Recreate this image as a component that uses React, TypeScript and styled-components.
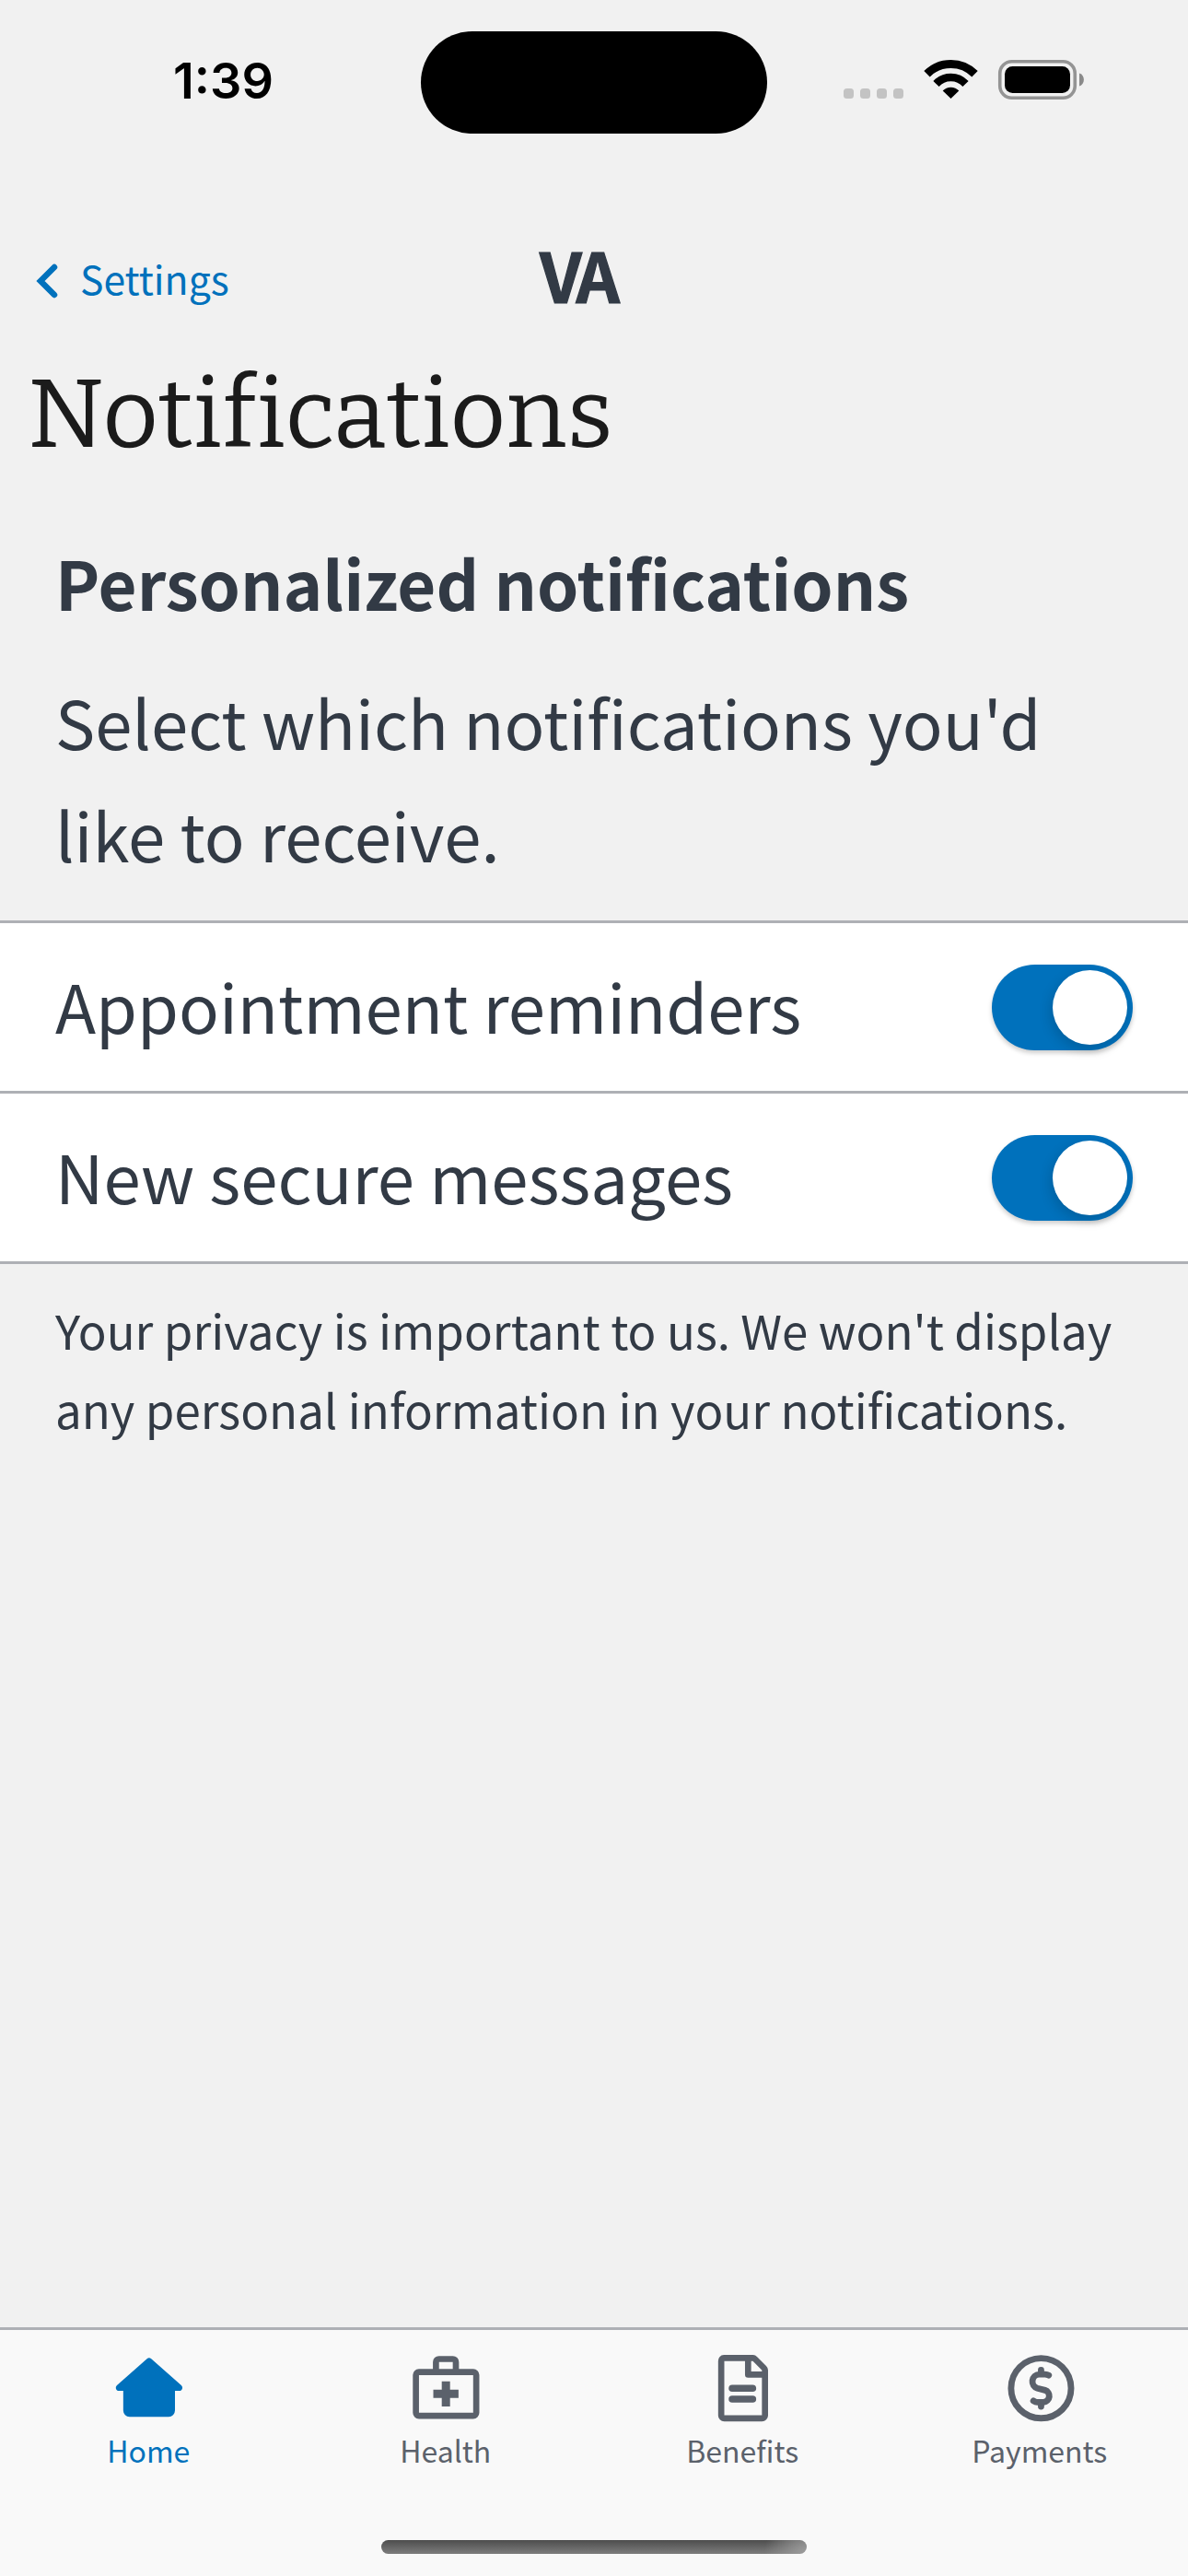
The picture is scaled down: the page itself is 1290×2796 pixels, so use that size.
import React, { useState } from "react";
import styled, { createGlobalStyle } from "styled-components";

const page = "#f1f1f1";
const ink = "#323a45";
const blue = "#0071bc";
const slate = "#5b616b";
const rule = "#aeb0b5";
const sans = `"Source Sans Pro", "Noto Sans CJK SC", "Noto Sans", sans-serif`;

const GlobalStyle = createGlobalStyle`
  * { box-sizing: border-box; }
  html, body { margin: 0; padding: 0; background: ${page}; }
  button { border: 0; padding: 0; background: none; font: inherit; color: inherit; }
`;

const Screen = styled.div`
  width: 1290px;
  height: 2796px;
  display: flex;
  flex-direction: column;
  background: ${page};
  color: ${ink};
  font-family: ${sans};
  overflow: hidden;
`;

const StatusBar = styled.header`
  height: 177px;
  display: grid;
  grid-template-columns: 457px 376px 1fr;
  color: #000;
`;

const Clock = styled.time`
  padding: 55px 0 0 188px;
  font-family: Inter, sans-serif;
  font-weight: 600;
  font-size: 54px;
  line-height: 66px;
`;

const Island = styled.div`
  margin-top: 33.5px;
  height: 111px;
  border-radius: 56px;
  background: #000;
`;

const StatusIcons = styled.div`
  display: flex;
  padding: 64px 0 0 83px;
`;

const NavBar = styled.nav`
  height: 205px;
  display: grid;
  grid-template-columns: 586px 1fr;
`;

const BackButton = styled.button`
  display: flex;
  align-items: flex-start;
  padding: 92px 0 0 39px;
  gap: 24px;
  color: ${blue};
`;

const BackIcon = styled.svg`
  margin-top: 17px;
`;

const BackLabel = styled.span`
  font-size: 42.7px;
  line-height: 64px;
`;

const Logo = styled.div`
  padding-top: 70px;
  font-weight: 700;
  font-size: 74px;
  line-height: 100px;
  letter-spacing: -5px;
  -webkit-text-stroke: 1.2px ${ink};
`;

const Title = styled.h1`
  margin: 0;
  height: 190px;
  padding: 2px 0 0 30px;
  font-family: "Bitter", "DejaVu Serif Condensed", "DejaVu Serif", serif;
  font-weight: 400;
  font-size: 105px;
  line-height: 132px;
  color: #1b1b1b;
`;

const Intro = styled.section`
  height: 427px;
  padding: 0 59px 0 60px;
`;

const SectionTitle = styled.h2`
  margin: -1px 0 29px;
  font-weight: 700;
  font-size: 72.5px;
  line-height: 122px;
`;

const Lead = styled.p`
  margin: 0;
  font-size: 72.5px;
  line-height: 122px;
`;

const Options = styled.ul`
  margin: 0;
  padding: 0;
  list-style: none;
  background: #fff;
  border-top: 3px solid ${rule};
`;

const Option = styled.li`
  height: 185px;
  display: flex;
  align-items: center;
  justify-content: space-between;
  padding: 0 60px;
  border-bottom: 3px solid ${rule};
`;

const OptionLabel = styled.span`
  font-size: 72.5px;
  line-height: 122px;
  padding-bottom: 5px;
`;

const Track = styled.button<{ $on: boolean }>`
  display: flex;
  justify-content: ${(p) => (p.$on ? "flex-end" : "flex-start")};
  align-items: center;
  width: 153px;
  height: 93px;
  padding: 0 6px;
  border-radius: 47px;
  background: ${(p) => (p.$on ? blue : "#b3b3b3")};
  box-shadow: 0 3px 5px rgba(0, 0, 0, 0.2);
`;

const Knob = styled.span`
  width: 81px;
  height: 81px;
  border-radius: 50%;
  background: #fff;
  box-shadow: -2px 5px 14px rgba(0, 0, 0, 0.16);
`;

const Note = styled.p`
  margin: 0;
  padding: 28px 40px 0 60px;
  font-size: 51px;
  line-height: 86px;
`;

const TabBar = styled.nav`
  margin-top: auto;
  height: 270px;
  background: #f9f9f9;
  border-top: 3px solid ${rule};
  display: flex;
  flex-direction: column;
  align-items: center;
`;

const Tabs = styled.div`
  width: 100%;
  height: 228px;
  display: grid;
  grid-template-columns: repeat(4, 1fr);
`;

const Tab = styled.button<{ $active?: boolean }>`
  display: flex;
  flex-direction: column;
  align-items: center;
  padding-top: 19.8px;
  color: ${(p) => (p.$active ? blue : slate)};
`;

const Glyph = styled.svg`
  width: 86.4px;
  height: 86.4px;
  flex: none;
`;

const TabLabel = styled.span`
  font-size: 32px;
  line-height: 48px;
`;

const HomeIndicator = styled.div`
  width: 462px;
  height: 15px;
  border-radius: 8px;
  background: radial-gradient(circle at 100% 100%, #9d9d9d, transparent 46px), linear-gradient(#4d4d4d, #7d7d7d);
`;

const tabs = [
  {
    label: "Home",
    icon: (
      <path
        fill="currentColor"
        d="M11.550 3.100a1 1 0 0 1 1.300 0L21.900 11.100c.65.6.3 1.700-.6 1.700H20v5.900a1.900 1.900 0 0 1-1.900 1.900H6.300a1.900 1.900 0 0 1-1.900-1.900v-5.900H3.100c-.9 0-1.250-1.100-.6-1.700z"
      />
    ),
  },
  {
    label: "Health",
    icon: (
      <g stroke="currentColor">
        <rect x="2.950" y="7.100" width="18.200" height="13.200" rx=".9" strokeWidth="1.850" />
        <path d="M9 7V4.100a.9.9 0 0 1 .9-.9h4.200a.9.9 0 0 1 .9.900V7" strokeWidth="1.850" />
        <path d="M12 9.900v7.600M8.200 13.700h7.600" strokeWidth="2.500" />
      </g>
    ),
  },
  {
    label: "Benefits",
    icon: (
      <g stroke="currentColor">
        <path
          d="M6.400 2.900h8.800c.2 0 .4.100.6.300l2.700 2.700c.2.200.3.400.3.600v13.700c0 .5-.4.900-.9.900H6.500c-.5 0-.9-.4-.9-.9V3.800c0-.5.3-.9.800-.9z"
          strokeWidth="1.850"
        />
        <path d="M13.700 3v4.900h5" strokeWidth="1.850" strokeLinejoin="round" />
        <path d="M8.900 12h6.200M8.900 15.300h6.200" strokeWidth="2.100" strokeLinecap="round" />
      </g>
    ),
  },
  {
    label: "Payments",
    icon: (
      <g stroke="currentColor" transform="translate(.35 0)">
        <circle cx="12" cy="12" r="9.050" strokeWidth="1.900" />
        <path
          d="M14.300 8.100c-.3-.2-.7-.3-1.100-.3h-1.800a2.150 2.150 0 0 0-.5 4.200l2.300.6a1.850 1.850 0 0 1-.4 3.600h-2c-.4 0-.8-.2-1.100-.4M12 6.500v1.300M12 16.200v1.300"
          strokeWidth="1.900"
          strokeLinecap="round"
        />
      </g>
    ),
  },
];

export default function App() {
  const [options, setOptions] = useState([
    { label: "Appointment reminders", on: true },
    { label: "New secure messages", on: true },
  ]);
  const toggle = (i: number) =>
    setOptions((list) => list.map((o, n) => (n === i ? { ...o, on: !o.on } : o)));

  return (
    <Screen>
      <GlobalStyle />
      <StatusBar>
        <Clock>1:39</Clock>
        <Island />
        <StatusIcons>
          <svg width="262" height="46" viewBox="0 0 262 46">
            {[0, 18, 36, 54].map((x) => (
              <rect key={x} x={x} y="32" width="11" height="11" rx="3.500" fill="#c3c3c3" />
            ))}
            <g fill="none" stroke="#000">
              <path d="M90.500 16.300a36.700 36.700 0 0 1 52 0" strokeWidth="9" />
              <path d="M100.500 27a21.800 21.800 0 0 1 32 0" strokeWidth="8.500" />
            </g>
            <path d="M107.700 34.500a12 12 0 0 1 17.600 0l-8.800 8.500z" />
            <rect x="169.750" y="2.750" width="81.500" height="39.500" rx="13" fill="none" stroke="#949494" strokeWidth="3.600" />
            <rect x="175" y="8" width="71" height="29" rx="8.500" />
            <path d="M256 15.500c6.500 2 6.500 12 0 14z" fill="#8a8a8a" />
          </svg>
        </StatusIcons>
      </StatusBar>
      <NavBar>
        <BackButton>
          <BackIcon width="24" height="38" viewBox="0 0 24 38" fill="none" stroke="currentColor" strokeWidth="6.500">
            <path d="M20 4L5 19l15 15" strokeLinecap="round" />
          </BackIcon>
          <BackLabel>Settings</BackLabel>
        </BackButton>
        <Logo>VA</Logo>
      </NavBar>
      <Title>Notifications</Title>
      <Intro>
        <SectionTitle>Personalized notifications</SectionTitle>
        <Lead>Select which notifications you'd like to receive.</Lead>
      </Intro>
      <Options>
        {options.map((o, i) => (
          <Option key={o.label}>
            <OptionLabel>{o.label}</OptionLabel>
            <Track $on={o.on} role="switch" aria-checked={o.on} aria-label={o.label} onClick={() => toggle(i)}>
              <Knob />
            </Track>
          </Option>
        ))}
      </Options>
      <Note>Your privacy is important to us. We won't display any personal information in your notifications.</Note>
      <TabBar>
        <Tabs>
          {tabs.map((t) => (
            <Tab key={t.label} $active={t.label === "Home"}>
              <Glyph viewBox="0 0 24 24" fill="none">
                {t.icon}
              </Glyph>
              <TabLabel>{t.label}</TabLabel>
            </Tab>
          ))}
        </Tabs>
        <HomeIndicator />
      </TabBar>
    </Screen>
  );
}
